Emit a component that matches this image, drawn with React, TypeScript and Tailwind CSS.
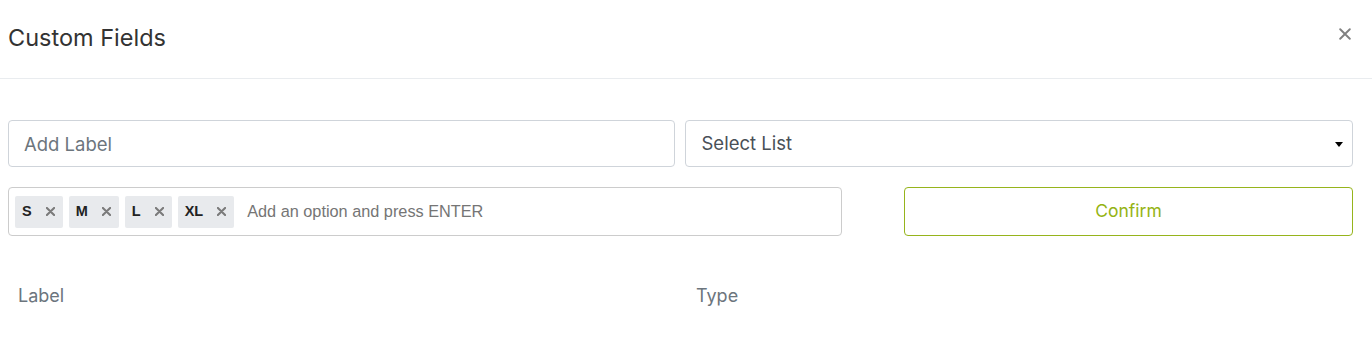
const tags = ['S', 'M', 'L', 'XL'];

function CloseIcon({ size, stroke, className }: { size: number; stroke: number; className?: string }) {
    return (
        <svg width={size} height={size} viewBox="0 0 10 10" className={className}>
            <path d="M1 1 L9 9 M9 1 L1 9" stroke="currentColor" strokeWidth={stroke} strokeLinecap="round" />
        </svg>
    );
}

export default function App() {
    return (
        <div className="w-[1372px] h-[343px] bg-white text-[#333] font-['Inter',sans-serif]">
            <div className="h-[79px] flex items-center justify-between pl-2 pr-[21px] border-b border-[#e9ecef]">
                <h4 className="text-[23.5px] leading-none text-[#333] -mt-[2px]">Custom Fields</h4>
                <button className="text-[#808080] -mt-[10px]">
                    <CloseIcon size={12} stroke={1.6} />
                </button>
            </div>

            <div className="pl-2 pr-[19px] pt-[41px]">
                <div className="flex gap-[10px]">
                    <input
                        placeholder="Add Label"
                        className="flex-1 h-[47px] px-[15px] rounded-[4px] border border-[#cfd4da] text-[18.5px] placeholder:text-[#6c757d] outline-none"
                    />
                    <div className="relative flex-1 h-[47px] rounded-[4px] border border-[#cfd4da] flex items-center px-[16px]">
                        <span className="text-[18.5px] text-[#495057]">Select List</span>
                        <span className="absolute right-[9px] top-[21px] w-0 h-0 border-l-[4px] border-r-[4px] border-t-[5px] border-l-transparent border-r-transparent border-t-black" />
                    </div>
                </div>

                <div className="flex mt-[20px] gap-[62px]">
                    <div className="w-[834px] h-[49px] rounded-[4px] border border-[#cccccc] flex items-center px-[6px] gap-[6px] font-['Liberation_Sans',Arial,sans-serif]">
                        {tags.map((t) => (
                            <span
                                key={t}
                                className="h-[32px] flex items-center gap-[14px] bg-[#e8eaed] rounded-[2px] pl-[7px] pr-[8px]"
                            >
                                <span className="text-[14.5px] font-bold text-[#222]">{t}</span>
                                <CloseIcon size={9} stroke={2.3} className="text-[#7a7a7a]" />
                            </span>
                        ))}
                        <span className="ml-[7px] text-[16.3px] text-[#757575]">Add an option and press ENTER</span>
                    </div>
                    <button className="flex-1 h-[49px] rounded-[4px] border border-[#96b41c] text-[#94b313] text-[17.5px]">
                        Confirm
                    </button>
                </div>

                <div className="flex mt-[46px] text-[18px] text-[#6c757d]">
                    <div className="w-[678px] pl-[10px]">Label</div>
                    <div className="flex-1 pl-[10px]">Type</div>
                </div>
            </div>
        </div>
    );
}
